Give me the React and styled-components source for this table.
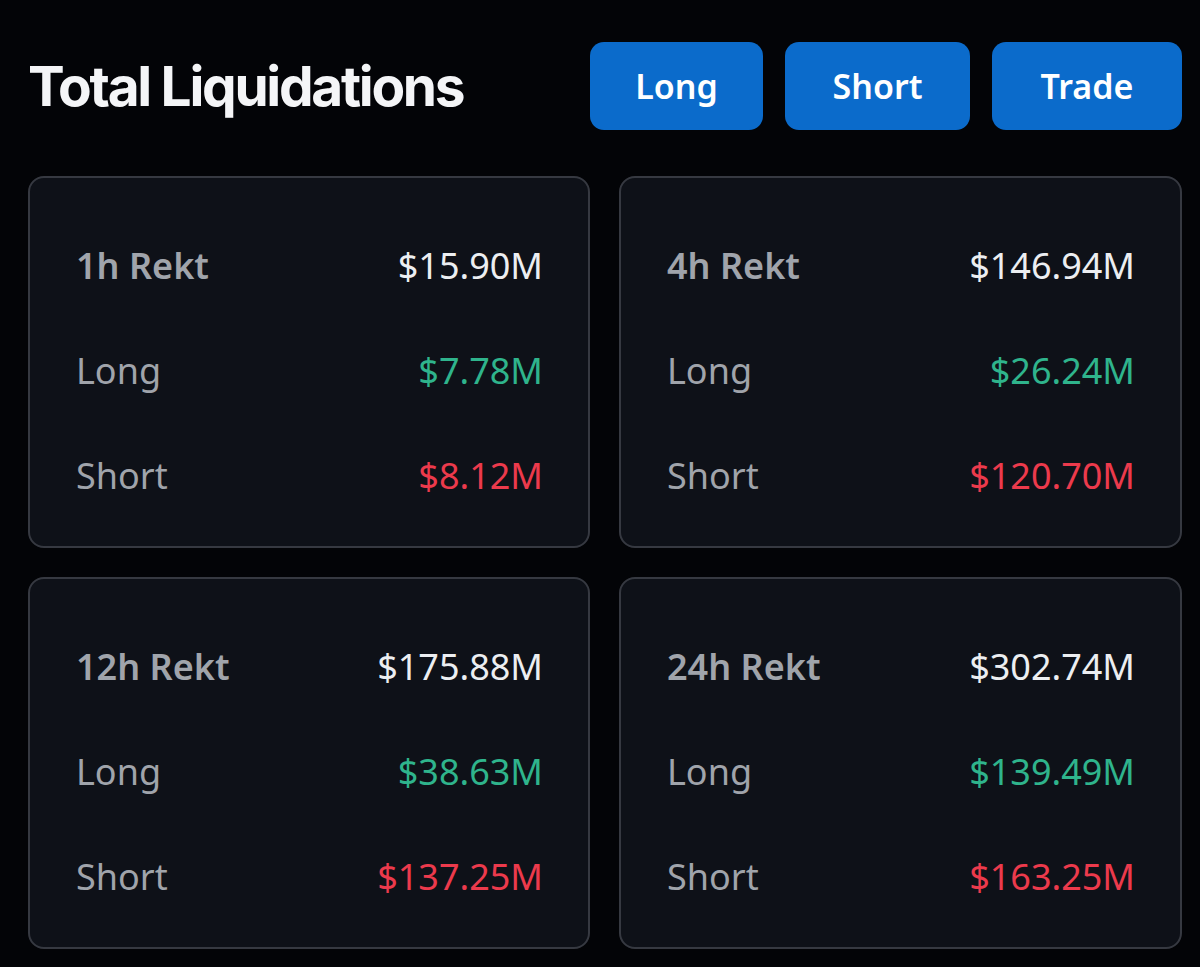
import React from 'react';
import styled, { createGlobalStyle } from 'styled-components';

const GlobalStyle = createGlobalStyle`
  html, body {
    margin: 0;
    background: #030407;
  }
  * { box-sizing: border-box; }
`;

const Page = styled.div`
  width: 1200px;
  min-height: 967px;
  padding: 42px 18px 0 28px;
  background: #030407;
  font-family: "Noto Sans", "Open Sans", sans-serif;
`;

const Header = styled.div`
  display: flex;
  align-items: center;
  justify-content: space-between;
  height: 88px;
  margin-bottom: 46px;
`;

const Title = styled.h1`
  margin: 0;
  font-family: Inter, "Noto Sans", sans-serif;
  font-size: 55px;
  font-weight: 700;
  letter-spacing: -2.3px;
  color: #f4f5f7;
`;

const Actions = styled.div`
  display: flex;
  gap: 22px;
`;

const Button = styled.button`
  width: ${({ w }) => w}px;
  height: 88px;
  border: none;
  border-radius: 14px;
  background: #0b6bcb;
  color: #fff;
  font-family: "Noto Sans", sans-serif;
  font-size: 34px;
  font-weight: 600;
  cursor: pointer;
`;

const Grid = styled.div`
  display: grid;
  grid-template-columns: 562px 563px;
  grid-auto-rows: 372px;
  column-gap: 29px;
  row-gap: 29px;
`;

const Card = styled.div`
  display: flex;
  flex-direction: column;
  padding: 35px 45px 18px 46px;
  border: 2px solid #363941;
  border-radius: 16px;
  background: #0e1118;
`;

const Row = styled.div`
  display: flex;
  align-items: center;
  justify-content: space-between;
  height: 105px;
  flex: none;
  font-size: 36px;
`;

const Label = styled.span`
  color: #a0a4ab;
  font-weight: ${({ strong }) => (strong ? 600 : 400)};
`;

const Value = styled.span`
  color: ${({ tone }) =>
    tone === 'up' ? '#2fb48c' : tone === 'down' ? '#ec3a4c' : '#eceef1'};
`;

const stats = [
  { period: '1h', total: '$15.90M', long: '$7.78M', short: '$8.12M' },
  { period: '4h', total: '$146.94M', long: '$26.24M', short: '$120.70M' },
  { period: '12h', total: '$175.88M', long: '$38.63M', short: '$137.25M' },
  { period: '24h', total: '$302.74M', long: '$139.49M', short: '$163.25M' },
];

export default function App() {
  return (
    <Page>
      <GlobalStyle />
      <Header>
        <Title>Total Liquidations</Title>
        <Actions>
          <Button w={173}>Long</Button>
          <Button w={185}>Short</Button>
          <Button w={190}>Trade</Button>
        </Actions>
      </Header>
      <Grid>
        {stats.map((s) => (
          <Card key={s.period}>
            <Row>
              <Label strong>{s.period} Rekt</Label>
              <Value>{s.total}</Value>
            </Row>
            <Row>
              <Label>Long</Label>
              <Value tone="up">{s.long}</Value>
            </Row>
            <Row>
              <Label>Short</Label>
              <Value tone="down">{s.short}</Value>
            </Row>
          </Card>
        ))}
      </Grid>
    </Page>
  );
}
